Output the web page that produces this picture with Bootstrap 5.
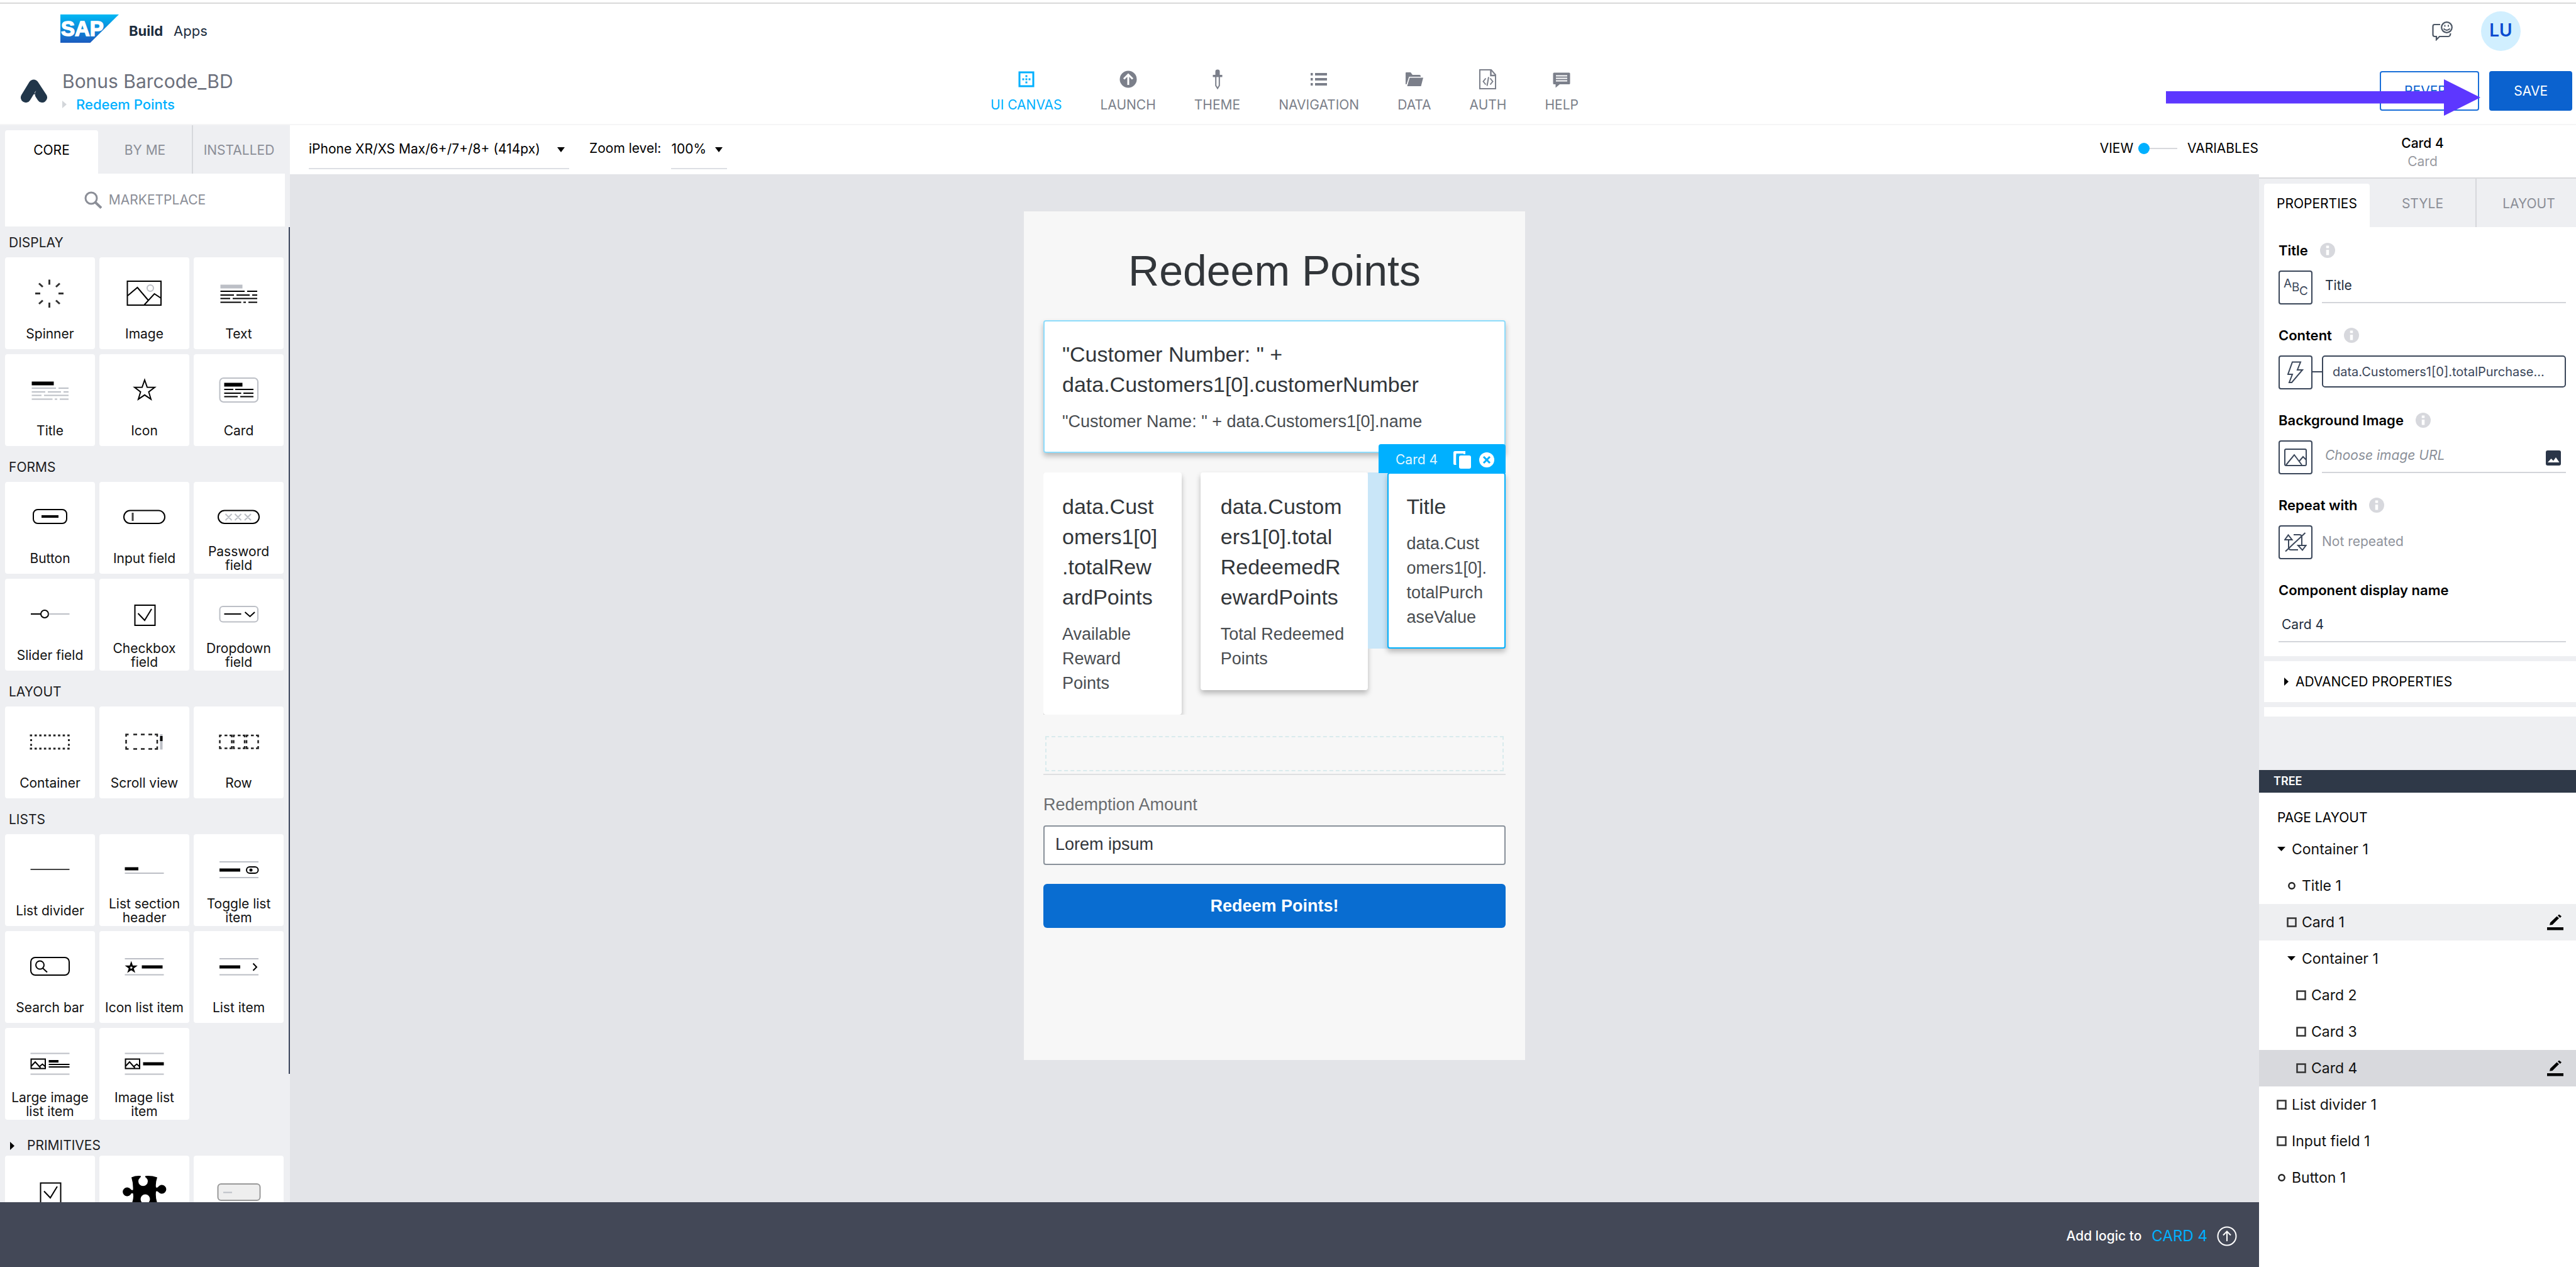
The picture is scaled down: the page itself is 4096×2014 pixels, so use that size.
<!DOCTYPE html>
<html lang="en">
<head>
<meta charset="utf-8">
<meta name="viewport" content="width=device-width, initial-scale=1">
<title>SAP Build Apps</title>
<link href="https://cdn.jsdelivr.net/npm/bootstrap@5.3.0/dist/css/bootstrap.min.css" rel="stylesheet">
<script src="https://cdn.jsdelivr.net/npm/bootstrap@5.3.0/dist/js/bootstrap.bundle.min.js"></script>
<style>
  body { font: 21px/24px Inter, "Open Sans", sans-serif; color: #000; background: #fff; }
  button { font: inherit; color: inherit; border: 0; background: none; padding: 0; }
  svg { display: block; flex: none; }
  .min-h-0 { min-height: 0; }
  .min-w-0 { min-width: 0; }

  /* top bar */
  .app-head { border-bottom: 2px solid #f5f5f6; height: 199px; padding-top: 4px; flex: none; }
  .head-brand { border-top: 2px solid #d9d9d9; height: 88px; padding: 0 88px 0 96px; }
  .brand-text { font-size: 22px; color: #1d2d3e; gap: 17px; margin-left: 16px; }
  .avatar { width: 63px; height: 63px; background: #d1efff; color: #0a4bd0; font-size: 28px; font-weight: 600; margin-left: 45px; padding-bottom: 2px; }
  .head-main { height: 105px; padding: 0 6px 0 33px; }
  .side-col { flex: 1 1 0; }
  .app-name { font-size: 30px; line-height: 36px; color: #6c707c; font-weight: 400; margin: 0 0 6px; }
  .page-link-row { font-size: 22px; line-height: 26px; gap: 15px; }
  .page-link-row a { color: #00b0ff; text-decoration: none; font-weight: 500; }
  .main-nav { gap: 61px; margin-right: 38px; }
  .main-nav a { display: flex; flex-direction: column; align-items: center; gap: 13px; color: #7b7f8a; text-decoration: none; }
  .main-nav a.active { color: #00b0ff; }
  .head-btn { height: 63px; border: 2px solid #1a6fd8; border-radius: 4px; color: #0b62cf; background: #fff; padding: 0 37px; }
  .head-btn.solid { background: #0b62cf; border-color: #0b62cf; color: #fff; }
  .pointer-arrow { position: absolute; right: 152px; top: 126px; }

  /* component library */
  .lib { width: 461px; background: #eeeff2; flex: none; position: relative; overflow: hidden; }
  .tab-strip { height: 77px; padding-left: 8px; }
  .tab-strip button { color: #8b8e97; padding-top: 2px; }
  .tab-strip button + button + button { border-left: 2px solid #d6d8dc; }
  .tab-strip .on { background: #fff; color: #000; margin-top: 8px; border-radius: 4px 4px 0 0; padding: 0 0 6px; }
  .tab-a { width: 148px; } .tab-b { width: 149px; } .tab-c { flex: 1; padding-right: 8px; }
  .market { height: 84px; margin: 0 8px; background: #fff; color: #8b8e97; gap: 11px; }
  .lib h2 { font-size: 21px; line-height: 24px; font-weight: 400; margin: 0; padding: 14px 0 11px 14px; color: #1c1c1e; }
  .lib .fold { padding: 21px 0 4px 16px; gap: 20px; }
  .tiles { display: grid; grid-template-columns: repeat(3, 143px); gap: 8px 7px; margin: 0 0 8px 8px; }
  .tile { height: 146px; background: #fff; border-radius: 4px; display: flex; flex-direction: column; line-height: 22px; text-align: center; color: #111; }
  .tile span { height: 44px; display: flex; align-items: center; justify-content: center; padding: 0 6px; }
  .tile svg { width: 143px; height: 100px; fill: none; stroke: #000; stroke-width: 2; }
  .tile .g { stroke: #bcbfc6; }
  .tile .b { stroke-width: 5; }
  .tile .t { stroke-width: 3; }
  .scroll-thumb { position: absolute; right: 0; top: 162px; width: 2px; height: 1346px; background: #39435a; }

  /* toolbar and canvas */
  .toolbar { height: 78px; padding: 0 1px 4px 30px; flex: none; }
  .pick { appearance: none; border: 0; border-bottom: 2px solid #dddfe4; border-radius: 0; background: url("data:image/svg+xml,%3Csvg xmlns='http://www.w3.org/2000/svg' viewBox='0 0 12 8'%3E%3Cpath d='M0 0h12L6 8z'/%3E%3C/svg%3E") no-repeat right 7px top 18px / 12px 8px; height: 53px; padding: 0 0 10px; margin-top: 13px; color: #000; font: inherit; }
  .pick-device { width: 414px; } .pick-zoom { width: 89px; }
  .pick-label-text { margin: 0 16px 0 32px; }
  .toggle-line { appearance: none; width: 62px; height: 18px; background: linear-gradient(#d8d9dd, #d8d9dd) center / 100% 2px no-repeat; margin: 0 16px 0 8px; }
  .toggle-line::-webkit-slider-thumb { appearance: none; width: 18px; height: 18px; border-radius: 50%; background: #00b0ff; }
  .stage { background: #e3e4e8; padding-top: 59px; }
  .phone { width: 797px; min-height: 1349px; background: #f7f7f7; padding: 54px 31px; font: 27px/39px "Liberation Sans", Arial, sans-serif; color: #4a4e52; }
  .phone h1 { font-size: 68px; line-height: 80px; font-weight: 400; color: #32363a; text-align: center; margin: 0 0 39px; }
  .tilecard { background: #fff; border: 2px solid #fff; border-radius: 4px; padding: 28px; box-shadow: 0 5px 9px rgba(0,0,0,.26); }
  .tilecard h3 { font-size: 34px; line-height: 48px; font-weight: 400; color: #32363a; margin: 0 0 16px; }
  .tilecard p { margin: 0; }
  .card-wide { border-color: #8edcfb; margin-bottom: 31px; }
  .card-reward { width: 220px; margin-right: 30px; clip-path: inset(0 -12px 0 0); white-space: nowrap; }
  .card-redeemed { width: 267px; padding-left: 30px; white-space: nowrap; }
  .card-value { background: #c9e6f8; padding-left: 31px; flex: 1; position: relative; }
  .card-value .tilecard { border-color: #00b0ff; white-space: nowrap; }
  .pick-label { position: absolute; right: 0; top: -45px; width: 202px; height: 46px; background: #00b0ff; color: #e2f6ff; border-radius: 4px 4px 0 0; font: 21px/24px Inter, sans-serif; padding: 3px 18px 0 27px; gap: 13px; }
  .drop-zone { height: 62px; border-bottom: 2px solid #dedfe1; padding: 0 3px 4px; margin: 34px 0 28px; }
  .drop-zone div { height: 100%; border: 2px dashed #d9ebed; }
  .phone label { color: #6a6d70; margin-bottom: 13px; display: block; }
  .phone input { width: 100%; height: 63px; border: 2px solid #89919a; border-radius: 4px; background: #fff; padding: 0 17px 3px; color: #32363a; }
  .redeem { width: 100%; height: 70px; background: #096dd1; border-radius: 6px; color: #fff; font-weight: 700; margin-top: 30px; }
  .logic { height: 103px; background: #434857; color: #fff; flex: none; padding: 5px 35px 0 0; font-weight: 500; }
  .logic a { font-size: 24px; font-weight: 400; color: #00b0ff; text-decoration: none; margin: 0 15px 0 16px; }

  /* inspector */
  .inspect { width: 504px; flex: none; background: #fff; overflow: hidden; }
  .inspect-in { margin-right: -16px; }
  .insp-title { height: 85px; border-bottom: 2px solid #d8d9dc; padding-top: 14px; line-height: 29px; text-align: center; font-weight: 500; }
  .insp-title small { display: block; font-size: inherit; color: #999ba2; font-weight: 400; }
  .props { background: #eeeff2; height: 940px; }
  .props .tab-strip button { width: 168px; }
  .sheet { background: #fff; margin-left: 8px; }
  .stub { height: 15px; margin-top: 8px; }
  .fields { padding: 22px 32px 22px 23px; }
  .fields .lab { font-size: 22px; line-height: 30px; font-weight: 600; gap: 19px; margin-bottom: 17px; }
  .field-row { height: 54px; margin-bottom: 34px; }
  .kind { width: 54px; height: 54px; border: 2px solid #3b475a; border-radius: 4px; display: flex; align-items: center; justify-content: center; flex: none; }
  .slot { padding-left: 15px; }
  .line-in { border: 0; border-bottom: 2px solid #d3d5da; border-radius: 0; background: none; height: 52px; width: 100%; padding: 0 5px 3px; color: #1f2e3e; outline: 0; }
  .line-in::placeholder { color: #8b9099; font-style: italic; }
  .wire { width: 15px; height: 2px; background: #3b475a; margin-bottom: 2px; }
  .bound { border: 2px solid #3b475a; border-radius: 5px; height: 51px; flex: 1; min-width: 0; padding: 0 15px; text-align: left; color: #3b475a; margin-bottom: 3px; white-space: nowrap; font-size: 20px; }
  .no-repeat-text { margin: 0 0 2px 15px; color: #8f939c; }
  .adv { height: 65px; padding-left: 32px; margin-top: 8px; gap: 11px; }
  .tree-head { height: 36px; background: #2f3948; color: #fff; font-size: 18px; font-weight: 600; line-height: 36px; padding-left: 23px; }
  .tree-top { padding: 18px 0 0 29px; line-height: 43px; }
  .tree-row { height: 58px; display: flex; align-items: center; gap: 8px; font-size: 23px; padding: 0 20px 0 28px; color: #111; }
  .lv1 { padding-left: 44px; } .lv2 { padding-left: 59px; }
  .hov { background: #eeeff1; } .sel { background: #d8d9dd; }
</style>
</head>
<body class="vh-100 overflow-hidden d-flex flex-column">

<svg width="0" height="0" class="position-absolute" aria-hidden="true">
  <symbol id="info" viewBox="0 0 24 24"><circle cx="12" cy="12" r="12" fill="#d7d8dd"/><path d="M12 4.500v4M12 11v8.500" stroke="#fff" stroke-width="4.500"/></symbol>
  <symbol id="box" viewBox="0 0 16 16"><rect x="1.500" y="1.500" width="13" height="13" fill="none" stroke="#333" stroke-width="2.500"/></symbol>
  <symbol id="ring" viewBox="0 0 16 16"><circle cx="8" cy="8" r="4.700" fill="none" stroke="#222" stroke-width="2.400"/></symbol>
  <symbol id="open" viewBox="0 0 16 16"><path d="M1 4h13L7.500 11z"/></symbol>
  <symbol id="pen" viewBox="0 0 26 26"><path d="M0 21h26v4.500H0z"/><path d="M4 17.500l1-4L15.500 3.500l3.500 3L8.500 17z M17 2.500l2-2 4 3-2.200 2.500z"/></symbol>
</svg>

<header class="app-head position-relative">
  <div class="head-brand d-flex align-items-center justify-content-between">
    <div class="d-flex align-items-center">
      <svg class="mb-2" width="93" height="45" viewBox="0 0 93 45"><defs><linearGradient id="sg" x2="0" y2="1"><stop offset="0" stop-color="#00b8f4"/><stop offset="1" stop-color="#1c5cbf"/></linearGradient></defs><path d="M0 0h93L47.500 45H0z" fill="url(#sg)"/><text x="1" y="34" font-family="Liberation Sans, Arial, sans-serif" font-weight="700" font-size="33" fill="#fff" stroke="#fff" stroke-width="1.500">SAP</text></svg>
      <div class="brand-text d-flex align-items-center"><b>Build</b><span>Apps</span></div>
    </div>
    <div class="d-flex align-items-center">
      <button type="button" aria-label="Feedback"><svg width="33" height="31" viewBox="0 0 33 31" fill="none" stroke="#4d5765" stroke-width="2.200"><path d="M13 5H4Q1.500 5 1.500 8v13q0 3 3 3h2.500v5l5-5h14q3 0 3.500-5"/><circle cx="23.500" cy="9.500" r="8.300"/><path d="M20.500 5.500v3M26 5.500v3M18.500 11.500q5 5 10 0" stroke-width="1.800"/></svg></button>
      <div class="avatar rounded-circle d-flex align-items-center justify-content-center">LU</div>
    </div>
  </div>
  <div class="head-main d-flex align-items-center">
    <div class="side-col d-flex align-items-center">
      <svg width="42" height="37" viewBox="0 0 42 37"><path d="M8 29L20.500 8.500L34 29" fill="none" stroke="#21364a" stroke-width="16" stroke-linecap="round" stroke-linejoin="round"/><path d="M24.500 18L22 21q1.500 8 2.500 13L16 35z" fill="#fff"/></svg>
      <div class="ms-4">
        <h1 class="app-name">Bonus Barcode_BD</h1>
        <div class="page-link-row d-flex align-items-center"><svg width="7" height="12" viewBox="0 0 7 12"><path d="M0 0l7 6-7 6z" fill="#d3d6da"/></svg><a href="#">Redeem Points</a></div>
      </div>
    </div>
    <nav class="main-nav d-flex">
      <a href="#" class="active"><svg width="32" height="32" viewBox="0 0 32 32" fill="none" stroke="currentColor"><rect x="5" y="5" width="22" height="22" stroke-width="3"/><path d="M16 9.500v13M9.500 16h13" stroke-width="3" stroke-dasharray="3 2"/></svg>UI CANVAS</a>
      <a href="#"><svg width="32" height="32" viewBox="0 0 32 32"><circle cx="16" cy="16" r="13.500" fill="currentColor"/><path d="M16 25V9M9 15.500L16 8.500l7 7" fill="none" stroke="#fff" stroke-width="3"/></svg>LAUNCH</a>
      <a href="#"><svg width="32" height="32" viewBox="0 0 32 32"><path d="M12.500 3.500q0-3 3.500-3t3.500 3V9H23.500v3.500h-15V9h4z" fill="currentColor"/><path d="M13.200 12v14L16 30.500 18.800 26V12" fill="none" stroke="currentColor" stroke-width="2"/></svg>THEME</a>
      <a href="#"><svg width="32" height="32" viewBox="0 0 32 32" stroke="currentColor" stroke-width="4"><path d="M3 8h3.500M3 16h3.500M3 24h3.500M10 8h19M10 16h19M10 24h19"/></svg>NAVIGATION</a>
      <a href="#"><svg width="32" height="32" viewBox="0 0 32 32" fill="currentColor"><path d="M2 6q0-1 1-1h7l3 4h11q2 0 2 2v1H7.500L3.500 24H2z"/><path d="M8.500 13.500H30L26.500 27H4.500z"/></svg>DATA</a>
      <a href="#"><svg width="32" height="32" viewBox="0 0 32 32" fill="none" stroke="currentColor" stroke-width="2"><path d="M3 1h18l7 8v22H3z"/><path d="M20.500 1v9H28" stroke-width="2.500"/><path d="M12.500 14.500L8.500 19.500l4 5M19.500 14.500l4 5-4 5M17 12.500l-2.500 14"/></svg>AUTH</a>
      <a href="#"><svg width="32" height="32" viewBox="0 0 32 32"><path d="M4 5.500h24q1.500 0 1.500 1.500v15.500q0 1.500-1.500 1.500H13l-6.500 5.500V24H4q-1.500 0-1.500-1.500V7q0-1.500 1.500-1.500z" fill="currentColor"/><path d="M7 10.500h18M7 14.500h18M7 18.500h18" stroke="#fff" stroke-width="1.800"/></svg>HELP</a>
    </nav>
    <div class="side-col d-flex justify-content-end gap-3">
      <button type="button" class="head-btn">REVERT</button>
      <button type="button" class="head-btn solid">SAVE</button>
    </div>
  </div>
  <svg class="pointer-arrow" width="500" height="58" viewBox="0 0 500 58" fill="#5d37ff"><path d="M0 19h442V0l58 29-58 29V38.500H0z"/></svg>
</header>

<div class="d-flex flex-grow-1 min-h-0">
  <div class="d-flex flex-column flex-grow-1 min-w-0">
    <div class="d-flex flex-grow-1 min-h-0">

      <aside class="lib">
        <div class="tab-strip d-flex">
          <button type="button" class="tab-a on">CORE</button><button type="button" class="tab-b">BY ME</button><button type="button" class="tab-c">INSTALLED</button>
        </div>
        <div class="market d-flex align-items-center justify-content-center">
          <svg width="28" height="28" viewBox="0 0 28 28" fill="none" stroke="#8b8e97" stroke-width="3"><circle cx="11" cy="11" r="9"/><path d="M17.500 17.500L27 26.500" stroke-width="4"/></svg>MARKETPLACE
        </div>

        <h2>DISPLAY</h2>
        <div class="tiles">
          <div class="tile"><svg viewBox="0 0 143 100"><path class="t" stroke="#333" d="M70.500 35.500v8M70.500 72v8M48 57.600h8M85 57.600h8M54 41.500l6 5.500M87 41.500l-6 5.500M54 74l6-5.500M87 74l-6-5.500"/></svg><span>Spinner</span></div>
          <div class="tile"><svg viewBox="0 0 143 100"><rect x="44.500" y="38" width="53.500" height="38"/><path d="M45 61L60.500 48l17 20M71.500 75.500L87.500 58 98 65"/><circle class="g" cx="81" cy="49" r="5"/></svg><span>Image</span></div>
          <div class="tile"><svg viewBox="0 0 143 100"><path class="g" stroke-width="6" d="M42.500 46.500h35"/><path d="M42.500 54h38.500M85 54h16M42.500 60H64M68 60h21M93 60h8M42.500 65.500H58M62 65.500h39M42.500 71.500h33M79 71.500h4M87 71.500h14"/></svg><span>Text</span></div>
          <div class="tile"><svg viewBox="0 0 143 100"><path stroke-width="6" d="M42.500 46.500h35"/><path class="g" d="M42.500 54h38.500M85 54h16M42.500 60H64M68 60h21M93 60h8M42.500 65.500H58M62 65.500h39M42.500 71.500h33M79 71.500h4M87 71.500h14"/></svg><span>Title</span></div>
          <div class="tile"><svg viewBox="0 0 143 100"><path d="M72 41l4 11.500 12 .3-9.500 7.200 3.500 11.500-10-6.700-10 6.700L65.500 60 56 52.800l12-.3z"/></svg><span>Icon</span></div>
          <div class="tile"><svg viewBox="0 0 143 100"><rect class="g" x="41.500" y="38" width="60.500" height="38" rx="6"/><path stroke-width="6" d="M48.500 48.500h29"/><path d="M48.500 56H63M66 56h29M48.500 62h27M79 62h16M48.500 67.500H70M74 67.500h21"/></svg><span>Card</span></div>
        </div>

        <h2>FORMS</h2>
        <div class="tiles">
          <div class="tile"><svg viewBox="0 0 143 100"><rect x="45" y="44" width="53" height="22" rx="7"/><path stroke-width="4" d="M58 55h27"/></svg><span>Button</span></div>
          <div class="tile"><svg viewBox="0 0 143 100"><rect x="39" y="45.500" width="65" height="20.500" rx="10"/><path class="t" stroke="#444" d="M53 49v13"/></svg><span>Input field</span></div>
          <div class="tile"><svg viewBox="0 0 143 100"><rect x="39" y="45.500" width="65" height="20.500" rx="10"/><path class="g" d="M50.500 51l10 10m0-10l-10 10M65.500 51l10 10m0-10l-10 10M81 51l10 10m0-10l-10 10"/></svg><span>Password field</span></div>
          <div class="tile"><svg viewBox="0 0 143 100"><path d="M41 56h16"/><circle cx="63" cy="56" r="6"/><path class="g" d="M69.500 56h33"/></svg><span>Slider field</span></div>
          <div class="tile"><svg viewBox="0 0 143 100"><rect x="56.500" y="42" width="32" height="32"/><path d="M61.500 55L72 66l11-18"/></svg><span>Checkbox field</span></div>
          <div class="tile"><svg viewBox="0 0 143 100"><rect class="g" x="41.500" y="44" width="60.500" height="24.500" rx="5"/><path d="M48.500 56h27M81.500 53l8 7 7.500-7"/></svg><span>Dropdown field</span></div>
        </div>

        <h2>LAYOUT</h2>
        <div class="tiles">
          <div class="tile"><svg viewBox="0 0 143 100"><path class="t" stroke="#222" stroke-dasharray="3.600 3.850" d="M39.500 46h64M39.500 67h64M41.500 52v3M41.500 59.500v3M101.500 52v3M101.500 59.500v3"/></svg><span>Container</span></div>
          <div class="tile"><svg viewBox="0 0 143 100"><path stroke="#222" stroke-width="2.500" d="M42.500 48v-3.500h4M54 44.500h6M66 44.500h6M78 44.500h6M88 44.500h4v3.500M42.500 53v6M92 53v6M42.500 63.500v4h4M54 67.500h6M66 67.500h6M78 67.500h6M88 67.500h4v-4"/><path class="g" stroke-width="4" d="M98.500 44v24.500"/><path stroke-width="4" d="M98.500 47v8"/></svg><span>Scroll view</span></div>
          <div class="tile"><svg viewBox="0 0 143 100"><path stroke="#222" stroke-width="2.500" d="M41.500 49V46h3M49 46h4.500M57 46h3.500v3M66.500 46v0M63.500 49V46h2M70 46h4.500M78 46h3v3M84 49V46h3M91 46h4.500M99 46h3.500v3M41.500 53.500v5M60.500 53.500v5M63.500 53.500v5M81 53.500v5M84 53.500v5M102.500 53.500v5M41.500 63v3.500h3M49 66.500h4.500M57 66.500h3.500v-3.500M63.500 63v3.500h2M70 66.500h4.500M78 66.500h3v-3.500M84 63v3.500h3M91 66.500h4.500M99 66.500h3.500v-3.500"/></svg><span>Row</span></div>
        </div>

        <h2>LISTS</h2>
        <div class="tiles">
          <div class="tile"><svg viewBox="0 0 143 100"><path stroke="#444" d="M40.500 56h62"/></svg><span>List divider</span></div>
          <div class="tile"><svg viewBox="0 0 143 100"><path class="b" d="M40.500 55H62"/><path class="g" d="M40.500 62h62"/></svg><span>List section header</span></div>
          <div class="tile"><svg viewBox="0 0 143 100"><path class="g" d="M41 44h62M41 69h62"/><path class="b" d="M41 57h33"/><rect x="84" y="52" width="18.500" height="10" rx="5"/><circle cx="91" cy="57" r="2.500" fill="#000" stroke="none"/></svg><span>Toggle list item</span></div>
          <div class="tile"><svg viewBox="0 0 143 100"><rect x="41" y="42" width="61" height="28" rx="7"/><circle cx="55.500" cy="54" r="6.500"/><path d="M60 59l7 6.500"/></svg><span>Search bar</span></div>
          <div class="tile"><svg viewBox="0 0 143 100"><path class="g" d="M40.500 44h62M40.500 69.500h62"/><path stroke-width="2.500" d="M50.700 51.500l1.500 4.500h5l-4 3 1.500 4.500-4-2.700-4 2.700 1.500-4.500-4-3h5z"/><path class="b" d="M67.500 57h33"/></svg><span>Icon list item</span></div>
          <div class="tile"><svg viewBox="0 0 143 100"><path class="g" d="M41 44h62M41 69.500h62"/><path class="b" d="M41 57h33"/><path d="M94.500 51.500l5.500 5.700-5.500 5.600"/></svg><span>List item</span></div>
          <div class="tile"><svg viewBox="0 0 143 100"><path class="g" d="M40.500 40.500h62M40.500 73.500h62"/><rect x="41.500" y="49.500" width="22.500" height="15"/><path d="M42 60.500l6-6.500 8.500 9.500M54 62l5.500-4.500 4.500 4"/><path stroke-width="4" d="M69.500 53H85"/><path d="M69.500 58h33M69.500 62h33"/></svg><span>Large image list item</span></div>
          <div class="tile"><svg viewBox="0 0 143 100"><path class="g" d="M40.500 40.500h62M40.500 73.500h62"/><rect x="41.500" y="49.500" width="22.500" height="15"/><path d="M42 60.500l6-6.500 8.500 9.500M54 62l5.500-4.500 4.500 4"/><path class="b" d="M69.500 57h33"/></svg><span>Image list item</span></div>
        </div>

        <h2 class="fold d-flex align-items-center"><svg width="7" height="13" viewBox="0 0 7 13"><path d="M0 0l7 6.500-7 6.500z"/></svg>PRIMITIVES</h2>
        <div class="tiles">
          <div class="tile"><svg viewBox="0 0 143 100"><rect x="56.500" y="43.500" width="32" height="32"/><path d="M62 56.500L72 67l11-18"/></svg></div>
          <div class="tile"><svg viewBox="0 0 143 100"><path fill="#000" stroke="none" d="M51 34.500q7-3 14.500-2.300 1.500 1-1 3a7.500 7.500 0 1 0 10 0q-3-2-1-3Q83 31.500 92 34.500q-3 9-2 16 3 1 4-1.500a7 7 0 1 1 0 9q-2-2.500-4-1-1 10 2 18l-2 16H52V75q3-8 1.500-15-3-1-4 2a7 7 0 1 1 0-9q1.500 2.500 4 1.500Q54 44 51 34.500z"/><circle cx="73" cy="69" r="7.500" fill="#fff" stroke="none"/></svg></div>
          <div class="tile"><svg viewBox="0 0 143 100"><rect x="38.500" y="45" width="67" height="26" rx="5" fill="#eee" stroke="#999"/><path class="g" d="M47 58.500h14"/></svg></div>
        </div>
        <div class="scroll-thumb"></div>
      </aside>

      <main class="d-flex flex-column flex-grow-1 min-w-0">
        <div class="toolbar d-flex align-items-center">
          <select class="pick pick-device" aria-label="Device"><option>iPhone XR/XS Max/6+/7+/8+ (414px)</option></select>
          <label for="zoom" class="pick-label-text">Zoom level:</label>
          <select class="pick pick-zoom" id="zoom"><option>100%</option></select>
          <label for="mode" class="ms-auto">VIEW</label>
          <input type="range" class="toggle-line" id="mode" min="0" max="1" value="0">
          <span>VARIABLES</span>
        </div>
        <div class="stage flex-grow-1 min-h-0 d-flex justify-content-center align-items-start">
          <section class="phone">
            <h1>Redeem Points</h1>
            <article class="tilecard card-wide">
              <h3>"Customer Number: " + data.Customers1[0].customerNumber</h3>
              <p>"Customer Name: " + data.Customers1[0].name</p>
            </article>
            <div class="d-flex align-items-start">
              <article class="tilecard card-reward">
                <h3>data.Cust<br>omers1[0]<br>.totalRew<br>ardPoints</h3>
                <p>Available<br>Reward<br>Points</p>
              </article>
              <article class="tilecard card-redeemed">
                <h3>data.Custom<br>ers1[0].total<br>RedeemedR<br>ewardPoints</h3>
                <p>Total Redeemed<br>Points</p>
              </article>
              <div class="card-value">
                <article class="tilecard">
                  <h3>Title</h3>
                  <p>data.Cust<br>omers1[0].<br>totalPurch<br>aseValue</p>
                </article>
                <div class="pick-label d-flex align-items-center"><span class="me-auto">Card 4</span>
                  <svg width="28" height="28" viewBox="0 0 28 28"><path d="M2.500 0H19v5H6.500Q4.500 5 4.500 7v15H2Q0 22 0 20V2.500Q0 0 2.500 0z" fill="#fff"/><path d="M4.500 4H16v3h-5q-2.500 0-2.500 2.500V20h-4z" fill="#00b0ff"/><rect x="9" y="7" width="19" height="21" rx="3" fill="#fff"/></svg>
                  <svg width="24" height="24" viewBox="0 0 24 24"><circle cx="12" cy="12" r="12" fill="#fff"/><path d="M7 7l10 10M17 7L7 17" stroke="#00b0ff" stroke-width="3"/></svg>
                </div>
              </div>
            </div>
            <div class="drop-zone"><div></div></div>
            <label for="amount">Redemption Amount</label>
            <input id="amount" type="text" value="Lorem ipsum">
            <button type="button" class="redeem">Redeem Points!</button>
          </section>
        </div>
      </main>
    </div>
    <footer class="logic d-flex align-items-center justify-content-end">
      <span>Add logic to</span><a href="#">CARD 4</a>
      <svg width="32" height="32" viewBox="0 0 32 32" fill="none" stroke="#fff" stroke-width="2"><circle cx="16" cy="16" r="14.500"/><path d="M16 24V9M10 14.500l6-6 6 6"/></svg>
    </footer>
  </div>

  <aside class="inspect">
    <div class="inspect-in">
      <div class="insp-title">Card 4<small>Card</small></div>
      <div class="props">
        <div class="tab-strip d-flex">
          <button type="button" class="on">PROPERTIES</button><button type="button">STYLE</button><button type="button">LAYOUT</button>
        </div>
        <div class="sheet fields">
          <div class="lab d-flex align-items-center"><label for="f-title">Title</label><svg width="24" height="24"><use href="#info"/></svg></div>
          <div class="field-row d-flex">
            <div class="kind"><svg width="38" height="36" viewBox="0 0 38 36" font-family="Inter, sans-serif" font-size="19" fill="#3b475a"><text x="0" y="18">A</text><text x="13" y="24">B</text><text x="25" y="30">C</text></svg></div>
            <div class="slot flex-grow-1"><input id="f-title" class="line-in" type="text" value="Title"></div>
          </div>
          <div class="lab d-flex align-items-center"><span>Content</span><svg width="24" height="24"><use href="#info"/></svg></div>
          <div class="field-row d-flex align-items-center">
            <div class="kind"><svg width="26" height="36" viewBox="0 0 26 36" fill="none" stroke="#3b475a" stroke-width="2"><path d="M8 1.500h13L16 14h8L7 34H3l5-13H1z"/></svg></div>
            <div class="wire"></div>
            <button type="button" class="bound">data.Customers1[0].totalPurchase...</button>
          </div>
          <div class="lab d-flex align-items-center"><label for="f-img">Background Image</label><svg width="24" height="24"><use href="#info"/></svg></div>
          <div class="field-row d-flex">
            <div class="kind"><svg width="36" height="28" viewBox="0 0 36 28" fill="none" stroke="#3b475a" stroke-width="2"><rect x="1" y="1" width="34" height="26" rx="2"/><path d="M3 26L16 10l12 16M24 20l6-7 5 5"/></svg></div>
            <div class="slot flex-grow-1 position-relative"><input id="f-img" class="line-in" type="text" placeholder="Choose image URL">
              <svg class="position-absolute end-0 top-0 mt-3 me-2" width="24" height="24" viewBox="0 0 24 24"><rect width="24" height="24" rx="3" fill="#2b3648"/><path d="M3 19l5.500-6 3.500 3.500L16 11l5.500 8z" fill="#fff"/></svg></div>
          </div>
          <div class="lab d-flex align-items-center"><span>Repeat with</span><svg width="24" height="24"><use href="#info"/></svg></div>
          <div class="field-row d-flex align-items-center">
            <div class="kind"><svg width="36" height="32" viewBox="0 0 36 32" fill="none" stroke="#3b475a" stroke-width="2"><path d="M1 12L6.500 4.500 12.500 12zM7 12v12q0 4 4 4h11M15 4h9q4 0 4 4v13M22 21h12.500L29 28.500zM2 30.500L33.500 1"/></svg></div>
            <span class="no-repeat-text">Not repeated</span>
          </div>
          <div class="lab mb-3"><label for="f-name">Component display name</label></div>
          <input id="f-name" class="line-in" type="text" value="Card 4">
        </div>
        <div class="sheet adv d-flex align-items-center"><svg width="7" height="13" viewBox="0 0 7 13"><path d="M0 0l7 6.500-7 6.500z"/></svg>ADVANCED PROPERTIES</div>
        <div class="sheet stub"></div>
      </div>
    </div>
    <div class="tree-head">TREE</div>
    <div class="tree-top">PAGE LAYOUT</div>
    <div class="tree-row"><svg width="16" height="16"><use href="#open"/></svg>Container 1</div>
    <div class="tree-row lv1"><svg width="16" height="16"><use href="#ring"/></svg>Title 1</div>
    <div class="tree-row lv1 hov"><svg width="16" height="16"><use href="#box"/></svg>Card 1<svg class="ms-auto" width="26" height="26"><use href="#pen"/></svg></div>
    <div class="tree-row lv1"><svg width="16" height="16"><use href="#open"/></svg>Container 1</div>
    <div class="tree-row lv2"><svg width="16" height="16"><use href="#box"/></svg>Card 2</div>
    <div class="tree-row lv2"><svg width="16" height="16"><use href="#box"/></svg>Card 3</div>
    <div class="tree-row lv2 sel"><svg width="16" height="16"><use href="#box"/></svg>Card 4<svg class="ms-auto" width="26" height="26"><use href="#pen"/></svg></div>
    <div class="tree-row"><svg width="16" height="16"><use href="#box"/></svg>List divider 1</div>
    <div class="tree-row"><svg width="16" height="16"><use href="#box"/></svg>Input field 1</div>
    <div class="tree-row"><svg width="16" height="16"><use href="#ring"/></svg>Button 1</div>
  </aside>
</div>
</body>
</html>
